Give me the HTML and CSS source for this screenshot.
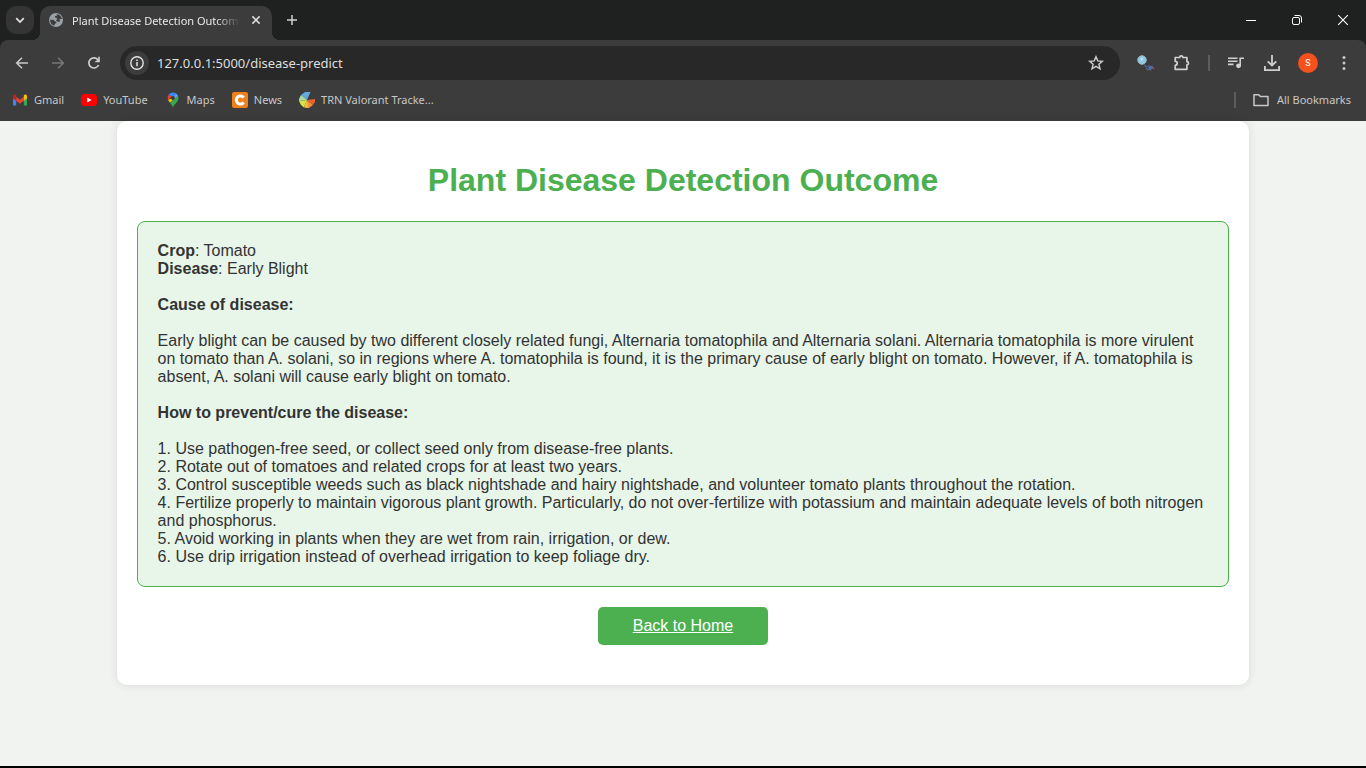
FILE: index.html
```html
<!DOCTYPE html>
<html lang="en">
<head>
<meta charset="utf-8">
<title>Plant Disease Detection Outcome</title>
<link rel="stylesheet" href="styles.css">
</head>
<body>
<div class="browser">
  <header class="chrome">
    <div class="titlebar">
      <button class="tab-search" aria-label="Search tabs">
        <svg width="12" height="12" viewBox="0 0 12 12"><path d="M2.2 4.2 6 8l3.8-3.8" fill="none" stroke="#e3e3e3" stroke-width="1.7"/></svg>
      </button>
      <div class="tab">
        <svg width="16" height="16" viewBox="0 0 16 16"><circle cx="8" cy="8" r="7" fill="#9aa0a6"/><path d="M8.6 2.2c2.8 0 5 2.100 5.400 4.800-1 .4-1.500-.5-2.300-.1-.5.800.7 1.400.1 2.500-.6.900-1.400.2-2.500.1L8 8.200 9.500 7 8.200 5.700 6.900 5.500l.2-1.400 1.700-.2zM2.100 7.700l3.300.1 1.700 1.600 1.400.4-.3 1.500-1.400.4-.5 2.100C3.800 13.200 2 10.500 2.100 7.700z" fill="#3c3c3c"/></svg>
        <span class="tab-title">Plant Disease Detection Outcome</span>
        <button class="tab-close" aria-label="Close tab">
          <svg width="10" height="10" viewBox="0 0 10 10"><path d="m1.400 1.400 7.200 7.200m0-7.200-7.200 7.200" stroke="#e3e3e3" stroke-width="1.500"/></svg>
        </button>
      </div>
      <button class="new-tab" aria-label="New tab">
        <svg width="12" height="12" viewBox="0 0 12 12"><path d="M6 1v10M1 6h10" stroke="#d0d0d0" stroke-width="1.500"/></svg>
      </button>
      <div class="window-controls">
        <button aria-label="Minimize"><svg width="12" height="12" viewBox="0 0 12 12"><path d="M1 6.500h10" stroke="#fff"/></svg></button>
        <button aria-label="Restore"><svg width="12" height="12" viewBox="0 0 12 12" fill="none" stroke="#fff"><rect x="1.500" y="3.500" width="7" height="7" rx="1.500"/><path d="M3.500 1.500h4.500a2.500 2.500 0 0 1 2.500 2.500v4.500"/></svg></button>
        <button aria-label="Close"><svg width="12" height="12" viewBox="0 0 12 12"><path d="m1.200 1.200 9.600 9.600m0-9.600-9.600 9.600" stroke="#fff" stroke-width="1.100"/></svg></button>
      </div>
    </div>

    <div class="toolbar">
      <nav class="nav-buttons" aria-label="History">
        <button aria-label="Back"><svg width="16" height="16" viewBox="0 0 16 16" fill="none" stroke="#c7c7c7" stroke-width="1.600"><path d="M14 8H3M8 2.700 2.700 8 8 13.300"/></svg></button>
        <button aria-label="Forward"><svg width="16" height="16" viewBox="0 0 16 16" fill="none" stroke="#777" stroke-width="1.600"><path d="M2 8h11M8 2.700 13.300 8 8 13.300"/></svg></button>
        <button aria-label="Reload"><svg width="16" height="16" viewBox="0 0 16 16"><path d="M12.600 10a5.100 5.100 0 1 1-.5-5.100l1 1.300" fill="none" stroke="#d0d0d0" stroke-width="1.700"/><path d="M13.800 1.800v5.400H8.500l1.800-1.700h1.900V1.800z" fill="#d0d0d0"/></svg></button>
      </nav>
      <div class="address">
        <button class="site-info" aria-label="View site information"><svg width="16" height="16" viewBox="0 0 16 16"><circle cx="8" cy="8" r="6.200" fill="none" stroke="#e3e3e3" stroke-width="1.400"/><path d="M8 7v4.200M8 4.500v1.600" stroke="#e3e3e3" stroke-width="1.500"/></svg></button>
        <input class="url" type="text" aria-label="Address" value="127.0.0.1:5000/disease-predict">
        <button class="star" aria-label="Bookmark this page"><svg width="16" height="16" viewBox="0 0 16 16"><path d="m8 1.700 1.800 4.200 4.600.4-3.500 3 1.100 4.500L8 11.400l-4 2.400 1.100-4.500-3.500-3 4.600-.4z" fill="none" stroke="#d0d0d0" stroke-width="1.400"/></svg></button>
      </div>
      <div class="actions">
        <button aria-label="Image search extension"><svg width="20" height="18" viewBox="0 0 20 18"><path d="m8 10 3 2.500 2-1.500 2.500 1.200 1-.5 1 2.600-2.500.7.500 1.500-2-.8-2.500.8.300-1.600-1.800.400 1.200-1.800-1.700-.8z" fill="#56709c"/><path d="m10 12 3 3M14 11l-3 4" stroke="#33497a"/><path d="m16.500 14 2 .7" stroke="#b34b48" stroke-width="1.200"/><circle cx="6" cy="6" r="4.200" fill="#8bc9e8" stroke="#a5b9c9"/><path d="M4.500 4.500 7 4l-1 3.500z" fill="#c9eefb"/></svg></button>
        <button aria-label="Extensions"><svg width="18" height="18" viewBox="0 0 18 18"><path d="M2.700 3.500h4a1.600 1.600 0 0 1 3.200 0h4v4.200a1.600 1.600 0 0 1 0 3.200v4.400H2.200v-4a2 2 0 0 0 0-4V3.500z" fill="none" stroke="#d0d0d0" stroke-width="1.700" stroke-linejoin="round"/></svg></button>
        <span class="divider"></span>
        <button aria-label="Media controls"><svg width="18" height="18" viewBox="0 0 18 18"><path d="M1 4.200h9.500M1 7.300h9.500M1 10.400h5.500M13.200 12.500V4.200h3.800" fill="none" stroke="#d0d0d0" stroke-width="1.600"/><circle cx="11.500" cy="11.800" r="2.400" fill="#d0d0d0"/></svg></button>
        <button aria-label="Downloads"><svg width="18" height="18" viewBox="0 0 18 18"><path d="M9 1v10M4.700 7.300 9 11.500l4.300-4.200M1.900 12v4.200h14.200V12" fill="none" stroke="#d0d0d0" stroke-width="1.800"/></svg></button>
        <button aria-label="Profile"><span class="avatar">S</span></button>
        <button aria-label="Browser menu"><svg width="16" height="16" viewBox="0 0 16 16" fill="#c7c7c7"><circle cx="8" cy="2.500" r="1.500"/><circle cx="8" cy="8" r="1.500"/><circle cx="8" cy="13.500" r="1.500"/></svg></button>
      </div>
    </div>

    <nav class="bookmarks" aria-label="Bookmarks">
      <a href="#"><svg width="16" height="16" viewBox="0 0 16 16"><path d="M1 3.500v10h3.200V6z" fill="#4285f4"/><path d="M15 3.500v10h-3.200V6z" fill="#34a853"/><path d="M4.200 4.800 8 7.700l3.800-2.900v4L8 11.700 4.200 8.800z" fill="#ea4335"/><path d="M1 4.500C1 2.500 3 2.100 4.200 3.200v5.600L1 6.500z" fill="#c5221f"/><path d="M15 4.500c0-2-2-2.400-3.200-1.300v5.600L15 6.500z" fill="#fbbc04"/></svg>Gmail</a>
      <a href="#"><svg width="16" height="16" viewBox="0 0 16 16"><rect y="2" width="16" height="12" rx="3.500" fill="#f00"/><path d="m6.200 5.500 4.500 2.500-4.500 2.500z" fill="#fff"/></svg>YouTube</a>
      <a href="#"><svg width="16" height="16" viewBox="0 0 16 16"><path d="M8 .5a5.500 5.500 0 0 0-4.300 2l4.300 3.600 3.200-4.600A5.500 5.500 0 0 0 8 .5z" fill="#4285f4"/><path d="M3.700 2.500A5.500 5.500 0 0 0 3 7.800L6.500 5z" fill="#ea4335"/><path d="M3 7.800c.4 1 1.200 2 2 3L12.800 3.500 8 6z" fill="#fbbc04"/><path d="M5 10.800C6.500 12.500 7.200 13.800 8 15.800c1-4.300 5.500-5.400 5.500-9.800 0-1-.3-1.800-.7-2.500z" fill="#34a853"/><path d="M11.200 1.500 8.500 4.800l1.300 1.900 3-3.200a5 5 0 0 0-1.600-2z" fill="#5aa2ff"/><circle cx="8" cy="6" r="1.900" fill="#3c3c3c"/></svg>Maps</a>
      <a href="#"><svg width="16" height="16" viewBox="0 0 16 16"><rect width="16" height="16" rx="2" fill="#ee801d"/><path d="M11.700 5.500A4.100 4.100 0 1 0 11.700 10.500" fill="none" stroke="#fff" stroke-width="3"/></svg>News</a>
      <a href="#"><svg width="16" height="16" viewBox="0 0 16 16"><path d="M8 8 2 3l4-3h5.500z" fill="#63a9dc"/><path d="M8 8 2 3 0 7v2z" fill="#add9a5"/><path d="M8 8 0 9l2 4 3 2.500z" fill="#d5e34a"/><path d="m8 8-3 7.500 4 .5 2-1z" fill="#f3c337"/><path d="m8 8 6 5-3.500 2.500L9 16z" fill="#f4903d"/><path d="m8 8 8-1v3l-2 3z" fill="#e8632e"/></svg>TRN Valorant Tracke...</a>
      <span class="divider push"></span>
      <a class="all" href="#"><svg width="16" height="16" viewBox="0 0 16 16"><path d="M1 2.700h4.800l1.600 1.700H15v9H1z" fill="none" stroke="#c7c7c7" stroke-width="1.500" stroke-linejoin="round"/></svg>All Bookmarks</a>
    </nav>
  </header>

  <main class="page">
    <section class="card">
      <h1>Plant Disease Detection Outcome</h1>
      <div class="result">
        <p><b>Crop</b>: Tomato<br><b>Disease</b>: Early Blight</p>
        <h2>Cause of disease:</h2>
        <p>Early blight can be caused by two different closely related fungi, Alternaria tomatophila and Alternaria solani. Alternaria tomatophila is more virulent on tomato than A. solani, so in regions where A. tomatophila is found, it is the primary cause of early blight on tomato. However, if A. tomatophila is absent, A. solani will cause early blight on tomato.</p>
        <h2>How to prevent/cure the disease:</h2>
        <p>1. Use pathogen-free seed, or collect seed only from disease-free plants.<br>
        2. Rotate out of tomatoes and related crops for at least two years.<br>
        3. Control susceptible weeds such as black nightshade and hairy nightshade, and volunteer tomato plants throughout the rotation.<br>
        4. Fertilize properly to maintain vigorous plant growth. Particularly, do not over-fertilize with potassium and maintain adequate levels of both nitrogen and phosphorus.<br>
        5. Avoid working in plants when they are wet from rain, irrigation, or dew.<br>
        6. Use drip irrigation instead of overhead irrigation to keep foliage dry.</p>
      </div>
      <a class="home" href="#">Back to Home</a>
    </section>
  </main>
</div>
</body>
</html>
```
FILE: styles.css
```css
* { box-sizing: border-box; }
body { margin: 0; font-family: "Liberation Sans", Arial, sans-serif; }
button { border: 0; padding: 0; background: none; display: flex; align-items: center; justify-content: center; }
svg { display: block; flex: none; }

.browser { min-height: 100vh; display: flex; flex-direction: column; border-bottom: 2px solid #000; }

.chrome { background: #1f2120; color: #dedede; font-family: "Noto Sans", "Open Sans", sans-serif; font-size: 11px; }
.titlebar { display: flex; height: 40px; padding: 6px 0 0 6px; }
.tab-search { width: 28px; height: 28px; border-radius: 10px; background: #353535; }
.tab { position: relative; display: flex; align-items: center; gap: 8px; width: 232px; margin-left: 6px; padding: 0 8px 6px; border-radius: 10px 10px 0 0; background: #3c3c3c; }
.tab::before, .tab::after { content: ""; position: absolute; bottom: 0; width: 8px; height: 8px; }
.tab::before { left: -8px; background: radial-gradient(circle at 0 0, transparent 8px, #3c3c3c 8px); }
.tab::after { right: -8px; background: radial-gradient(circle at 100% 0, transparent 8px, #3c3c3c 8px); }
.tab-title { flex: 1; overflow: hidden; white-space: nowrap; color: #e8e8e8; mask-image: linear-gradient(to right, #000 86%, transparent); }
.tab-close { width: 16px; height: 16px; }
.new-tab { width: 28px; height: 28px; margin-left: 6px; }
.window-controls { display: flex; margin-left: auto; }
.window-controls button { width: 46px; height: 28px; }

.toolbar { display: flex; align-items: center; height: 46px; padding: 0 4px; border-radius: 8px 8px 0 0; background: #3c3c3c; }
.nav-buttons { display: flex; }
.nav-buttons button { width: 36px; height: 34px; }
.address { display: flex; align-items: center; flex: 1; height: 34px; margin-left: 8px; padding: 0 12px 0 5px; border-radius: 17px; background: #282828; }
.site-info { width: 24px; height: 24px; border-radius: 12px; background: #3c3c3c; }
.url { flex: 1; min-width: 0; margin-left: 8px; padding: 0; border: 0; outline: 0; background: transparent; color: #dedede; font: 13px "Noto Sans", "Open Sans", sans-serif; }
.star { width: 24px; height: 24px; }
.actions { display: flex; align-items: center; margin-left: 8px; }
.actions button { width: 36px; height: 34px; }
.divider { width: 2px; height: 16px; background: #5c5c5c; }
.actions .divider { margin: 0 8px; }
.avatar { width: 20px; height: 20px; border-radius: 10px; background: #f4511e; color: #fff; font: 9px/20px Roboto, sans-serif; text-align: center; }

.bookmarks { display: flex; align-items: center; gap: 17px; height: 35px; padding: 0 15px 8px 12px; background: #3c3c3c; }
.bookmarks a { display: flex; align-items: center; gap: 6px; color: #c7c7c7; text-decoration: none; white-space: nowrap; }
.push { margin-left: auto; }
.bookmarks .all { gap: 8px; }

.page { flex: 1; background: #f1f3f1; }
.card { width: calc(80% + 40px); margin: 0 auto; padding: 40px 20px; border-radius: 10px; background: #fff; box-shadow: 0 0 10px rgba(0, 0, 0, 0.1); }
.card h1 { margin: 0 0 22px; color: #4caf50; font-size: 32px; line-height: 38px; text-align: center; }
.result { padding: 20px; border: 1px solid #4caf50; border-radius: 8px; background: #e8f5e9; color: #333; font-size: 16px; line-height: 18px; }
.result p { margin: 0; }
.result h2 { margin: 18px 0; font-size: 16px; line-height: 18px; }
.home { display: block; width: 170px; margin: 20px auto 0; padding: 10px; border-radius: 5px; background: #4caf50; color: #fff; font-size: 16px; line-height: 18px; text-align: center; }
```
